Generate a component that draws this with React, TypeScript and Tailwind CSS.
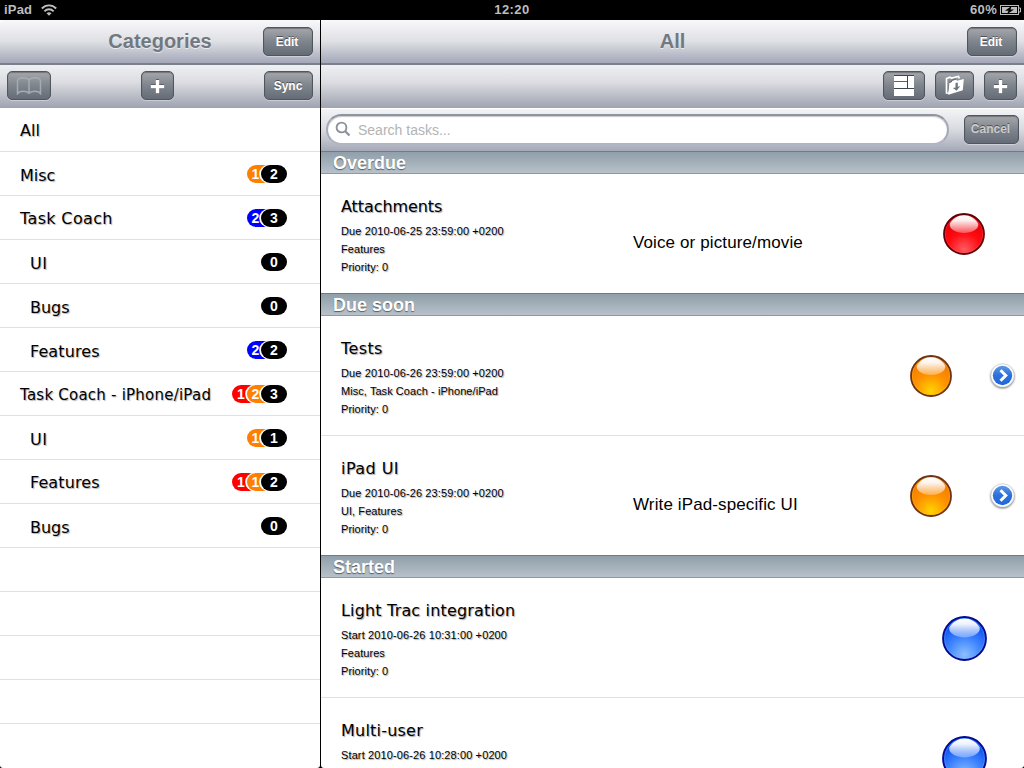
import React, { useId } from "react";

type Badge = { n: number; color: "red" | "orange" | "blue" | "black" };
type Category = { name: string; indent?: boolean; low?: boolean; font: string; badges: Badge[] };

const categories: Category[] = [
  { name: "All", font: "text-[16px]", badges: [] },
  { name: "Misc", low: true, font: "text-[16px]", badges: [{ n: 1, color: "orange" }, { n: 2, color: "black" }] },
  { name: "Task Coach", font: "text-[16px] tracking-[0.35px]", badges: [{ n: 2, color: "blue" }, { n: 3, color: "black" }] },
  { name: "UI", indent: true, low: true, font: "text-[16px] tracking-[0.6px]", badges: [{ n: 0, color: "black" }] },
  { name: "Bugs", indent: true, low: true, font: "text-[16px]", badges: [{ n: 0, color: "black" }] },
  { name: "Features", indent: true, low: true, font: "text-[16px] tracking-[0.1px]", badges: [{ n: 2, color: "blue" }, { n: 2, color: "black" }] },
  { name: "Task Coach - iPhone/iPad", font: "text-[15px] tracking-[0.23px]", badges: [{ n: 1, color: "red" }, { n: 2, color: "orange" }, { n: 3, color: "black" }] },
  { name: "UI", indent: true, low: true, font: "text-[16px] tracking-[0.6px]", badges: [{ n: 1, color: "orange" }, { n: 1, color: "black" }] },
  { name: "Features", indent: true, font: "text-[16px] tracking-[0.1px]", badges: [{ n: 1, color: "red" }, { n: 1, color: "orange" }, { n: 2, color: "black" }] },
  { name: "Bugs", indent: true, low: true, font: "text-[16px]", badges: [{ n: 0, color: "black" }] },
];

const badgeColors = { red: "bg-[#ff0000]", orange: "bg-[#ff8000]", blue: "bg-[#0000ff]", black: "bg-black" };

function Badges({ items }: { items: Badge[] }) {
  return (
    <div className="mr-[33px] flex font-['Liberation_Sans',sans-serif] text-[14px] leading-[18px] font-bold text-white">
      {items.map((b, i) => (
        <span
          key={i}
          className={`flex h-[18px] w-[26px] items-center pt-px ${badgeColors[b.color]} rounded-full ${
            i > 0 ? "-ml-[11.5px] shadow-[-1.5px_0_0_0.3px_#fff]" : ""
          } ${b.color === "black" ? "justify-center" : "justify-start pl-[5px]"}`}
        >
          {b.n}
        </span>
      ))}
    </div>
  );
}

function BarButton({ className = "", color = "text-white", children }: { className?: string; color?: string; children: React.ReactNode }) {
  return (
    <button
      className={`flex h-[29px] shrink-0 items-center justify-center rounded-[5px] border border-[#50565e] bg-linear-to-b from-[#a5a8ac] via-[#7f858d] to-[#666c77] font-['Liberation_Sans',sans-serif] text-[12px] font-bold shadow-[0_1px_0_rgba(255,255,255,0.35),inset_0_1px_1px_rgba(40,45,55,0.4)] [text-shadow:0_-1px_0_rgba(0,0,0,0.45)] ${color} ${className}`}
    >
      {children}
    </button>
  );
}

function Plus() {
  return (
    <svg width="15" height="15" viewBox="0 0 15 15" className="relative top-px">
      <path d="M6 0h3v1H6zM1 5h5v1H1zM9 5h5v1H9z" fill="#3f454d" />
      <path d="M6 1h3v5h5v3H9v5H6V9H1V6h5z" fill="#fff" stroke="#fff" strokeWidth="0.3" />
    </svg>
  );
}

const glass = {
  red: { rim: "#5f0008", stops: ["#ff5a62", "#ff0a10", "#e60006"], glow: "#ff6a70" },
  orange: { rim: "#6f3018", stops: ["#ffd400", "#ff9200", "#f47a00"], glow: "#ffd800" },
  blue: { rim: "#060a90", stops: ["#8cc0ff", "#3c82ff", "#0a50f0"], glow: "#8cc4ff" },
};

function Orb({ color, size }: { color: keyof typeof glass; size: number }) {
  const id = useId();
  const g = glass[color];
  return (
    <svg width={size} height={size} viewBox="0 0 42 42" className="block">
      <defs>
        <radialGradient id={id + "a"} cx="0.5" cy="0.88" r="0.75">
          <stop offset="0" stopColor={g.stops[0]} />
          <stop offset="0.55" stopColor={g.stops[1]} />
          <stop offset="1" stopColor={g.stops[2]} />
        </radialGradient>
        <linearGradient id={id + "b"} x1="0" y1="0" x2="0" y2="1">
          <stop offset="0" stopColor="#fff" />
          <stop offset="0.3" stopColor="#fff" stopOpacity="0.93" />
          <stop offset="1" stopColor="#fff" stopOpacity="0.3" />
        </linearGradient>
      </defs>
      <circle cx="21" cy="21" r="20" fill={`url(#${id}a)`} stroke={g.rim} strokeWidth="1.8" />
      <circle cx="21" cy="21" r="18.6" fill="none" stroke={g.glow} strokeOpacity="0.35" strokeWidth="0.8" />
      <path d="M6.800 10.800C9.800 5.500 15 2.300 21 2.300S32.200 5.500 35.200 10.800C36.200 16 29 20 21 20S5.800 16 6.800 10.800z" fill={`url(#${id}b)`} />
    </svg>
  );
}

function Disclosure() {
  const id = useId();
  return (
    <svg width="29" height="29" viewBox="0 0 29 29" className="block drop-shadow-[0_1px_1px_rgba(0,0,0,0.55)]">
      <linearGradient id={id} x1="0" y1="0" x2="0" y2="1">
        <stop offset="0" stopColor="#5d97e6" />
        <stop offset="0.5" stopColor="#2c71da" />
        <stop offset="1" stopColor="#1f66e0" />
      </linearGradient>
      <circle cx="14.5" cy="13.5" r="11.6" fill="#fff" stroke="#c4c4c4" strokeWidth="0.5" />
      <circle cx="14.5" cy="13.5" r="9.7" fill={`url(#${id})`} />
      <path d="M12.500 8.300l5.300 5.200-5.300 5.200" fill="none" stroke="#fff" strokeWidth="3" />
    </svg>
  );
}

type Task = {
  title: string;
  track: string;
  date: string;
  details: string[];
  detailTrack?: string;
  desc?: string;
  orb: keyof typeof glass;
  arrow?: boolean;
};

const sections: { name: string; tasks: Task[] }[] = [
  {
    name: "Overdue",
    tasks: [{ title: "Attachments", track: "tracking-[-0.08px]", date: "Due 2010-06-25 23:59:00 +0200", details: ["Features", "Priority: 0"], desc: "Voice or picture/movie", orb: "red" }],
  },
  {
    name: "Due soon",
    tasks: [
      { title: "Tests", track: "tracking-[0.4px]", date: "Due 2010-06-26 23:59:00 +0200", details: ["Misc, Task Coach - iPhone/iPad", "Priority: 0"], orb: "orange", arrow: true },
      { title: "iPad UI", track: "tracking-[0.45px]", date: "Due 2010-06-26 23:59:00 +0200", details: ["UI, Features", "Priority: 0"], desc: "Write iPad-specific UI", orb: "orange", arrow: true },
    ],
  },
  {
    name: "Started",
    tasks: [
      { title: "Light Trac integration", track: "tracking-[0.17px]", date: "Start 2010-06-26 10:31:00 +0200", details: ["Features", "Priority: 0"], orb: "blue" },
      { title: "Multi-user", track: "tracking-[0.22px]", date: "Start 2010-06-26 10:28:00 +0200", details: [], orb: "blue" },
    ],
  },
];

function TaskRow({ t, last }: { t: Task; last: boolean }) {
  return (
    <div className={`flex shrink-0 ${last ? "h-[119px]" : "h-[120px] border-b border-[#e0e0e0]"}`}>
      <div className="w-[292px] shrink-0 pt-[21px] pl-5 whitespace-nowrap [text-shadow:1px_1px_1px_rgba(0,0,0,0.35)]">
        <div className={`h-[27px] font-['DejaVu_Sans',sans-serif] text-[16px] leading-[23px] ${t.track}`}>{t.title}</div>
        <div className="font-['Liberation_Sans',sans-serif] text-[11px] leading-[18px]">
          <div className="tracking-[0.12px]">{t.date}</div>
          {t.details.map((d) => (
            <div key={d} className="tracking-[0.06px]">{d}</div>
          ))}
        </div>
      </div>
      <div className="w-[260px] shrink-0 pt-[59px] pl-5 font-['Liberation_Sans',sans-serif] text-[17px] leading-5 tracking-[0.12px] whitespace-nowrap">{t.desc}</div>
      <div className={`flex h-[119px] flex-1 items-center justify-end gap-[36px] pt-[1px] ${t.arrow ? "pr-[7px]" : t.orb === "red" ? "pr-[39px]" : "pr-[37px]"}`}>
        <Orb color={t.orb} size={t.orb === "blue" ? 45 : 42} />
        {t.arrow && <Disclosure />}
      </div>
    </div>
  );
}

const navGradient = "bg-linear-to-b from-[#f8f8fb] via-[#dfe0e4] via-50% to-[#a3a7b8]";
const toolGradient = "bg-linear-to-b from-[#eff0f3] via-[#dcdde2] via-40% to-[#9fa3b1]";

function NavBar({ title, children }: { title: string; children: React.ReactNode }) {
  return (
    <div className={`grid h-[45px] shrink-0 grid-cols-[57px_1fr_57px] items-center rounded-t-[4px] border-b-2 border-[#7b808b] ${navGradient}`}>
      <h1 className="col-start-2 pb-px text-center font-['Liberation_Sans',sans-serif] text-[20px] leading-6 font-bold text-[#717880] [text-shadow:0_1px_0_rgba(255,255,255,0.6)]">{title}</h1>
      {children}
    </div>
  );
}

export default function App() {
  return (
    <div className="flex h-[768px] w-[1024px] flex-col overflow-hidden bg-black font-['Liberation_Sans',sans-serif]">
      <div className="grid h-5 shrink-0 grid-cols-3 items-center text-[13px] leading-5 font-bold text-[#bdbdbd]">
        <div className="flex items-center gap-[9px] pl-1">
          <span className="tracking-[0.2px]">iPad</span>
          <svg width="16" height="12" viewBox="0 0 16 12" fill="none" stroke="#bdbdbd" strokeWidth="1.9">
            <path d="M.8 4.500C4.800.3 11.200.3 15.200 4.500M3.400 7.300c2.600-2.700 6.600-2.700 9.200 0" />
            <path d="M5.500 9.200c1.400-1.400 3.600-1.400 5 0L8 11.700z" fill="#bdbdbd" stroke="none" />
          </svg>
        </div>
        <div className="text-center tracking-[0.4px]">12:20</div>
        <div className="flex items-center justify-end gap-[3px] pr-[3px]">
          <span className="tracking-[0.3px]">60%</span>
          <svg width="21" height="11" viewBox="0 0 21 11">
            <rect x="0.5" y="0.5" width="18" height="9" fill="none" stroke="#bdbdbd" />
            <path d="M19 3h1.500v4H19" fill="none" stroke="#bdbdbd" />
            <rect x="2" y="2" width="15" height="6" fill="#bdbdbd" />
            <path d="M11.500 1L5 5.700h3.500L7 9.300l7-4.800h-3.500z" fill="#000" />
          </svg>
        </div>
      </div>

      <div className="flex min-h-0 flex-1">
        <aside className="mr-px flex w-80 shrink-0 flex-col overflow-hidden rounded-b-[3px] bg-white">
          <NavBar title="Categories">
            <BarButton className="w-[50px] pr-[2px]">Edit</BarButton>
          </NavBar>
          <div className={`flex h-[43px] shrink-0 items-center justify-between px-[7px] pb-[2px] ${toolGradient}`}>
            <BarButton className="w-[44px]">
              <svg width="26" height="18" viewBox="0 0 26 18" fill="none" strokeWidth="1.5">
                <path d="M13 3.500C11-.2 3-.2 1.500 3.500v13c2-3 9-3 11.500-.3 2.500-2.700 9.500-2.700 11.500.3v-13C23-.2 15-.2 13 3.500zM13 3.500v12" stroke="#a6abb2" />
              </svg>
            </BarButton>
            <BarButton className="-ml-px w-[33px]"><Plus /></BarButton>
            <BarButton className="w-[49px] pr-px">Sync</BarButton>
          </div>
          {categories.map((c, i) => (
            <div key={i} className="flex h-11 shrink-0 items-center justify-between border-b border-[#e0e0e0]">
              <span className={`font-['DejaVu_Sans',sans-serif] leading-5 whitespace-nowrap [text-shadow:1px_1px_1px_rgba(0,0,0,0.3)] ${c.indent ? "pl-[30px]" : "pl-5"} ${c.low ? "pt-[5px]" : "pt-[3px]"} ${c.font}`}>{c.name}</span>
              <Badges items={c.badges} />
            </div>
          ))}
          {[0, 1, 2, 3].map((i) => (
            <div key={i} className="h-11 shrink-0 border-b border-[#e0e0e0]" />
          ))}
        </aside>

        <main className="flex min-w-0 flex-1 flex-col overflow-hidden rounded-b-[3px] bg-white">
          <NavBar title="All">
            <BarButton className="w-[50px] pr-[2px]">Edit</BarButton>
          </NavBar>
          <div className={`flex h-[43px] shrink-0 items-center justify-end gap-[10px] pr-[7px] pb-[2px] ${toolGradient}`}>
            <BarButton className="w-[42px]">
              <svg width="20" height="21" viewBox="0 0 20 21">
                <path d="M0 0h20v1H0zM0 5h13v1H0zM0 13h20v1H0zM13 1h1v12h-1z" fill="#41464e" />
                <path d="M0 1h13v5H0zM0 7h13v6H0zM14 1h6v12h-6zM0 14h20v7H0z" fill="#fff" />
                <path d="M0 6h13v1H0z" fill="#5a6068" />
              </svg>
            </BarButton>
            <BarButton className="w-[39px]">
              <svg width="20" height="21" viewBox="0 0 20 21">
                <path d="M1.500 18.500V3.500l3.500-1.300 1.500 1 7-1.700.8 2" fill="none" stroke="#fff" strokeWidth="1.7" />
                <path d="M1 17.800l3 .7 1.500-10.500" fill="none" stroke="#fff" strokeWidth="1.300" />
                <path d="M4.500 8l2-.7.800-1.600 3.900-1 .9 1.100L18.800 4l-1 11.300L3.300 19.800z" fill="#fff" />
                <path d="M10.500 8l2.300-.5v4.300l2.500-.7-3.700 4.700-3.700-2.800 2.600-.6z" fill="#6f757e" />
                <path d="M4.500 7.300l2-.8.800-1.500 3.700-1" fill="none" stroke="#4f555d" strokeWidth="0.7" />
              </svg>
            </BarButton>
            <BarButton className="w-[33px]"><Plus /></BarButton>
          </div>
          <div className="flex h-[43px] shrink-0 items-center justify-between border-t border-white bg-linear-to-b from-[#f3f4f6] via-[#d8dae0] via-50% to-[#a5a9b7] pr-[5px] pb-[2px] pl-[5px]">
            <div className="flex h-[31px] w-[623px] items-center gap-[7px] rounded-full border-2 border-t-[#8d95a3] border-r-[#a4abb8] border-b-[#b0b5c1] border-l-[#a4abb8] bg-white pl-[7px] shadow-[inset_0_1px_1px_#c8c8c8]">
              <svg width="16" height="16" viewBox="0 0 16 16" fill="none" stroke="#8b929c">
                <circle cx="6.500" cy="6.500" r="4.900" strokeWidth="1.900" />
                <path d="M10 10l4.500 4.500" strokeWidth="2.300" />
              </svg>
              <span className="pt-px text-[14px] leading-5 text-[#b3b3b3]">Search tasks...</span>
            </div>
            <BarButton className="w-[55px] pr-[2px]" color="text-[#c9ccd0]">Cancel</BarButton>
          </div>
          {sections.map((s) => (
            <React.Fragment key={s.name}>
              <h2 className="h-[23px] shrink-0 border-t border-b border-t-[#6e7c86] border-b-[#93989f] bg-linear-to-b from-[#909fa9] to-[#b7c1ca] pl-3 font-['Liberation_Sans',sans-serif] text-[18px] leading-[23px] font-bold text-white [text-shadow:0_1px_1px_rgba(0,0,0,0.5)]">{s.name}</h2>
              {s.tasks.map((t, i) => (
                <TaskRow key={t.title} t={t} last={i === s.tasks.length - 1} />
              ))}
            </React.Fragment>
          ))}
        </main>
      </div>
    </div>
  );
}
